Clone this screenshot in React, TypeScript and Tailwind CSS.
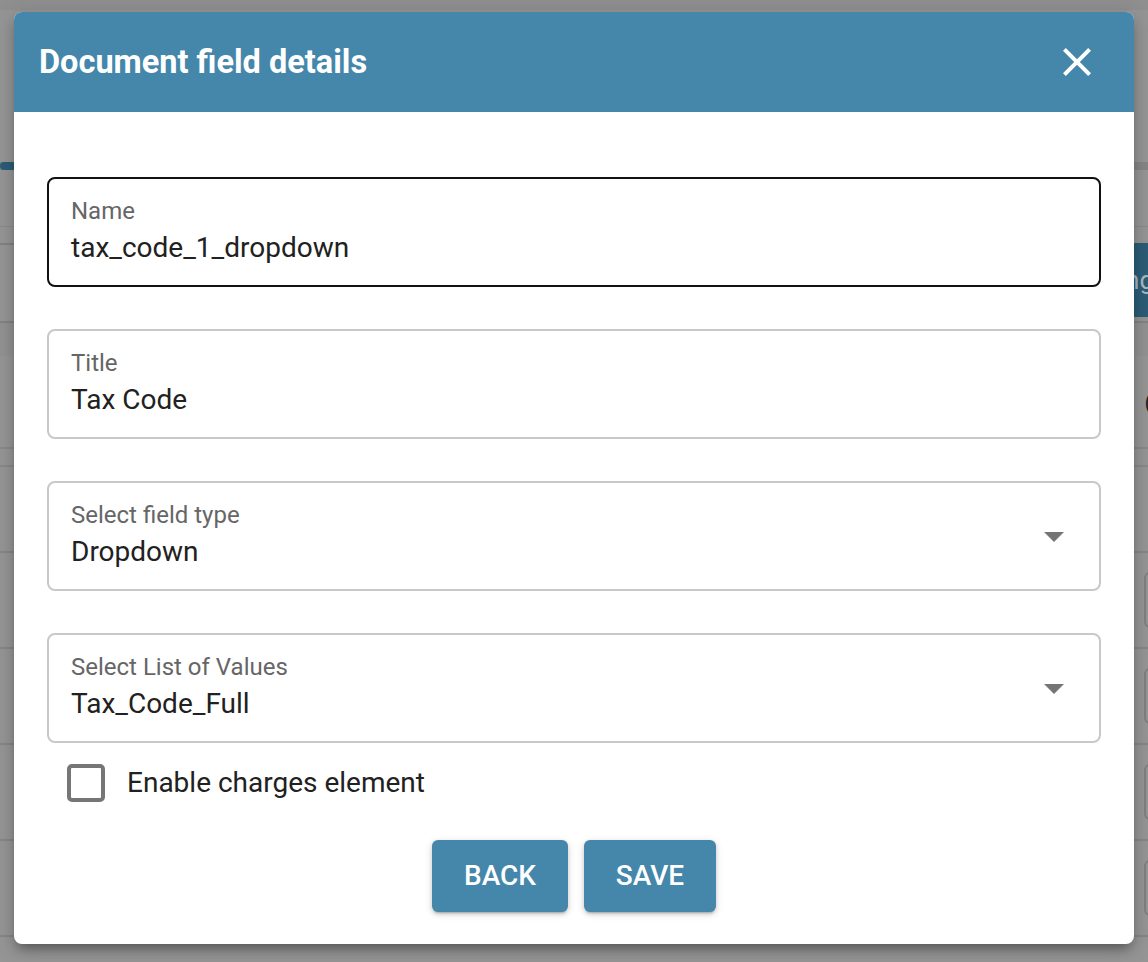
import React from "react";

const Field = ({ label, value, focused, select }: { label: string; value: string; focused?: boolean; select?: boolean }) => (
  <div
    className={
      "relative flex h-[110px] flex-col justify-start rounded-[8px] border-2 pl-[22px] pr-[22px] pt-[18px] " +
      (focused ? "border-[#111111]" : "border-[#c8c8c8]")
    }
  >
    <div className="text-[24px] leading-[28px] text-[#666666]">{label}</div>
    <div className="mt-[6px] text-[28px] leading-[34px] text-[#212121]">{value}</div>
    {select && (
      <svg
        className="absolute right-[21px] top-[29px]"
        width="48"
        height="48"
        viewBox="0 0 24 24"
        fill="#757575"
      >
        <path d="M7 10l5 5 5-5z" />
      </svg>
    )}
  </div>
);

const BgRow = ({ h, border, children, className }: { h: string; border?: string; children?: React.ReactNode; className?: string }) => (
  <div className={"relative flex w-full shrink-0 " + h + " " + (border ?? "") + " " + (className ?? "")}>{children}</div>
);

export default function App() {
  return (
    <div
      className="relative h-[962px] w-[1148px] overflow-hidden bg-[#959595]"
      style={{ fontFamily: "Roboto, 'Noto Sans', Arial, sans-serif" }}
    >
      {/* dimmed page behind the dialog */}
      <div className="flex h-full w-full flex-col">
        <BgRow h="h-[10px]" className="bg-[#8f8f8f]" />
        <BgRow h="h-[152px]" />
        <BgRow h="h-[8px]" className="bg-[#868686]">
          <div className="h-full w-[14px] rounded-l-full bg-[#2c5d77]" />
        </BgRow>
        <BgRow h="h-[57px]" border="border-b border-[#8a8a8a]" />
        <BgRow h="h-[18px]" border="border-b-2 border-[#828282]" />
        <BgRow h="h-[78px]" border="border-b-2 border-[#838383]" className="justify-end">
          <div className="mt-[-2px] flex h-[74px] w-[80px] items-center justify-end overflow-hidden bg-[#2c5d77] text-[26px] text-[#a9b9c2]">
            <span className="mr-[-6px]">ng</span>
          </div>
        </BgRow>
        <BgRow h="h-[33px]" className="bg-[#929292]" />
        <BgRow h="h-[93px]" border="border-b-2 border-[#898989]" className="justify-end">
          <span className="mr-[-4px] mt-[30px] text-[22px] text-[#222]">(</span>
        </BgRow>
        <BgRow h="h-[18px]" border="border-b-2 border-[#898989]" />
        {[0, 1, 2, 3, 4].map((i) => (
          <BgRow key={i} h={i === 0 ? "h-[86px]" : "h-[96px]"} border="border-b-2 border-[#868686]" className="justify-end items-center">
            {i > 0 && <div className="mr-[-20px] h-[56px] w-[24px] rounded-[6px] border-2 border-[#808080]" />}
          </BgRow>
        ))}
      </div>

      {/* dialog */}
      <div className="absolute left-[14px] top-[12px] flex h-[932px] w-[1120px] flex-col overflow-hidden rounded-[8px] bg-white shadow-[0_8px_12px_-4px_rgba(0,0,0,0.35),0_4px_20px_2px_rgba(0,0,0,0.15)]">
        <div className="flex h-[100px] shrink-0 items-center justify-between bg-[#4487ab] pl-[25px] pr-[33px]">
          <h2 className="text-[32.5px] font-bold leading-[38px] text-white">Document field details</h2>
          <svg width="48" height="48" viewBox="0 0 24 24" fill="white">
            <path d="M19 6.41 17.59 5 12 10.59 6.41 5 5 6.41 10.59 12 5 17.59 6.41 19 12 13.41 17.59 19 19 17.59 13.41 12z" />
          </svg>
        </div>
        <div className="flex flex-col px-[33px] pt-[65px]">
          <div className="flex flex-col gap-[42px]">
            <Field label="Name" value="tax_code_1_dropdown" focused />
            <Field label="Title" value="Tax Code" />
            <Field label="Select field type" value="Dropdown" select />
            <Field label="Select List of Values" value="Tax_Code_Full" select />
          </div>
          <div className="mt-[21px] flex items-center pl-[20px]">
            <div className="h-[38px] w-[38px] rounded-[5px] border-4 border-[#767676]" />
            <span className="ml-[22px] text-[28px] leading-[34px] text-[#212121]">Enable charges element</span>
          </div>
          <div className="mt-[38px] flex justify-center gap-[16px]">
            <button className="flex h-[72px] w-[136px] items-center justify-center rounded-[6px] bg-[#4487ab] text-[28px] font-medium text-white shadow-[0_3px_2px_-2px_rgba(0,0,0,0.2),0_2px_4px_0_rgba(0,0,0,0.14),0_2px_8px_0_rgba(0,0,0,0.12)]">
              BACK
            </button>
            <button className="flex h-[72px] w-[132px] items-center justify-center rounded-[6px] bg-[#4487ab] text-[28px] font-medium text-white shadow-[0_3px_2px_-2px_rgba(0,0,0,0.2),0_2px_4px_0_rgba(0,0,0,0.14),0_2px_8px_0_rgba(0,0,0,0.12)]">
              SAVE
            </button>
          </div>
        </div>
      </div>
    </div>
  );
}
